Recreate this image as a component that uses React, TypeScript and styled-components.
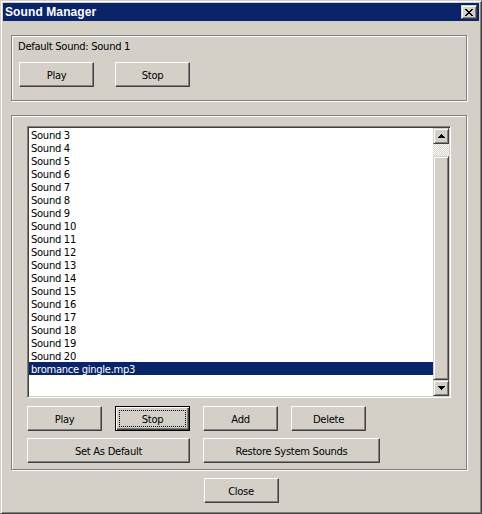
import React from 'react';
import styled, { createGlobalStyle, css } from 'styled-components';

const FACE = '#d4d0c8';
const NAVY = '#0a246a';
const FONT = `'DejaVu Sans', Verdana, sans-serif`;
const TITLE_FONT = `'Liberation Sans', Arial, sans-serif`;

const GlobalStyle = createGlobalStyle`
  html, body {
    margin: 0;
    padding: 0;
    background: ${FACE};
  }
  * {
    box-sizing: border-box;
  }
`;

const raised = css`
  border: 1px solid;
  border-color: #fff #404040 #404040 #fff;
  box-shadow: inset -1px -1px #808080;
  background: ${FACE};
`;

const raisedScroll = css`
  border: 1px solid;
  border-color: ${FACE} #404040 #404040 ${FACE};
  box-shadow: inset 1px 1px #fff, inset -1px -1px #808080;
  background: ${FACE};
`;

const Window = styled.div`
  width: 482px;
  height: 514px;
  display: flex;
  flex-direction: column;
  padding: 2px;
  background: ${FACE};
  border: 1px solid;
  border-color: ${FACE} #404040 #404040 ${FACE};
  box-shadow: inset 1px 1px #fff, inset -1px -1px #808080;
  font-family: ${FONT};
  font-size: 10px;
  letter-spacing: -0.3px;
  color: #000;
`;

const TitleBar = styled.div`
  height: 18px;
  flex: none;
  display: flex;
  align-items: center;
  justify-content: space-between;
  padding: 0 2px;
  background: ${NAVY};
`;

const Title = styled.span`
  color: #fff;
  font-family: ${TITLE_FONT};
  font-weight: bold;
  font-size: 12px;
  letter-spacing: 0.1px;
`;

const CloseBox = styled.div`
  width: 16px;
  height: 14px;
  display: flex;
  align-items: center;
  justify-content: center;
  ${raisedScroll};
  padding-top: 1px;
`;

const Body = styled.div`
  flex: 1;
  display: flex;
  flex-direction: column;
  padding: 14px 0 0 8px;
`;

const Group = styled.div<{ $height: number }>`
  width: 456px;
  height: ${({ $height }) => $height}px;
  border: 1px solid #808080;
  box-shadow: inset 1px 1px #fff, 1px 1px #fff;
`;

const TopGroup = styled(Group)`
  padding: 3px 0 0 6px;
`;

const ListGroup = styled(Group)`
  margin-top: 14px;
  padding: 10px 0 0 15px;
  display: flex;
  flex-direction: column;
`;

const Label = styled.div`
  height: 13px;
  line-height: 13px;
  padding-top: 1px;
`;

const ButtonRow = styled.div<{ $gap: number; $top: number; $left?: number }>`
  display: flex;
  gap: ${({ $gap }) => $gap}px;
  margin-top: ${({ $top }) => $top}px;
  padding-left: ${({ $left }) => $left ?? 0}px;
`;

const Button = styled.button<{ $w?: number; $default?: boolean }>`
  position: relative;
  width: ${({ $w }) => $w ?? 75}px;
  height: 25px;
  padding: 2px 0 0;
  font-family: ${FONT};
  font-size: 10px;
  letter-spacing: -0.3px;
  color: #000;
  ${raised};
  ${({ $default }) =>
    $default &&
    css`
      border-color: #000;
      box-shadow: inset 1px 1px #fff, inset -1px -1px #404040,
        inset -2px -2px #808080;
      &::after {
        content: '';
        position: absolute;
        inset: 3px;
        border: 1px dotted #000;
      }
    `}
`;

const ListBox = styled.div`
  width: 424px;
  height: 272px;
  display: flex;
  padding: 1px;
  background: #fff;
  border: 1px solid;
  border-color: #808080 #fff #fff #808080;
  box-shadow: inset 1px 1px #404040, inset -1px -1px ${FACE};
`;

const Items = styled.div`
  flex: 1;
  overflow: hidden;
`;

const Item = styled.div<{ $selected?: boolean }>`
  height: 13px;
  line-height: 13px;
  padding: 1px 0 0 2px;
  white-space: nowrap;
  background: ${({ $selected }) => ($selected ? NAVY : 'transparent')};
  color: ${({ $selected }) => ($selected ? '#fff' : '#000')};
`;

const ScrollBar = styled.div`
  width: 16px;
  display: flex;
  flex-direction: column;
`;

const ScrollButton = styled.div`
  width: 16px;
  height: 16px;
  flex: none;
  display: flex;
  align-items: center;
  justify-content: center;
  ${raisedScroll};
`;

const Track = styled.div`
  flex: 1;
  display: flex;
  flex-direction: column;
  padding-top: 12px;
  background: repeating-conic-gradient(#fff 0 25%, ${FACE} 0 50%) 0 0 / 2px 2px;
`;

const Thumb = styled.div`
  flex: 1;
  ${raisedScroll};
`;

const Footer = styled.div`
  display: flex;
  justify-content: center;
  margin-top: 8px;
  margin-left: -8px;
`;

const CloseGlyph = () => (
  <svg width="8" height="7" viewBox="0 0 8 7" shapeRendering="crispEdges">
    <path
      d="M0 0h2v1H0zM6 0h2v1H6zM1 1h2v1H1zM5 1h2v1H5zM2 2h4v1H2zM3 3h2v1H3zM2 4h4v1H2zM1 5h2v1H1zM5 5h2v1H5zM0 6h2v1H0zM6 6h2v1H6z"
      fill="#000"
    />
  </svg>
);

const Arrow = ({ down }: { down?: boolean }) => (
  <svg width="7" height="4" viewBox="0 0 7 4" shapeRendering="crispEdges">
    <path
      d={down ? 'M0 0h7v1H0zM1 1h5v1H1zM2 2h3v1H2zM3 3h1v1H3z' : 'M3 0h1v1H3zM2 1h3v1H2zM1 2h5v1H1zM0 3h7v1H0z'}
      fill="#000"
    />
  </svg>
);

const sounds = Array.from({ length: 18 }, (_, i) => `Sound ${i + 3}`);

const App = () => {
  return (
    <>
      <GlobalStyle />
      <Window>
        <TitleBar>
          <Title>Sound Manager</Title>
          <CloseBox>
            <CloseGlyph />
          </CloseBox>
        </TitleBar>
        <Body>
          <TopGroup $height={66}>
            <Label>Default Sound: Sound 1</Label>
            <ButtonRow $gap={21} $top={10} $left={1}>
              <Button>Play</Button>
              <Button>Stop</Button>
            </ButtonRow>
          </TopGroup>

          <ListGroup $height={355}>
            <ListBox>
              <Items>
                {sounds.map((s) => (
                  <Item key={s}>{s}</Item>
                ))}
                <Item $selected>bromance gingle.mp3</Item>
              </Items>
              <ScrollBar>
                <ScrollButton>
                  <Arrow />
                </ScrollButton>
                <Track>
                  <Thumb />
                </Track>
                <ScrollButton>
                  <Arrow down />
                </ScrollButton>
              </ScrollBar>
            </ListBox>
            <ButtonRow $gap={13} $top={8}>
              <Button>Play</Button>
              <Button $default>Stop</Button>
              <Button>Add</Button>
              <Button>Delete</Button>
            </ButtonRow>
            <ButtonRow $gap={13} $top={7}>
              <Button $w={163}>Set As Default</Button>
              <Button $w={177}>Restore System Sounds</Button>
            </ButtonRow>
          </ListGroup>

          <Footer>
            <Button>Close</Button>
          </Footer>
        </Body>
      </Window>
    </>
  );
};

export default App;
